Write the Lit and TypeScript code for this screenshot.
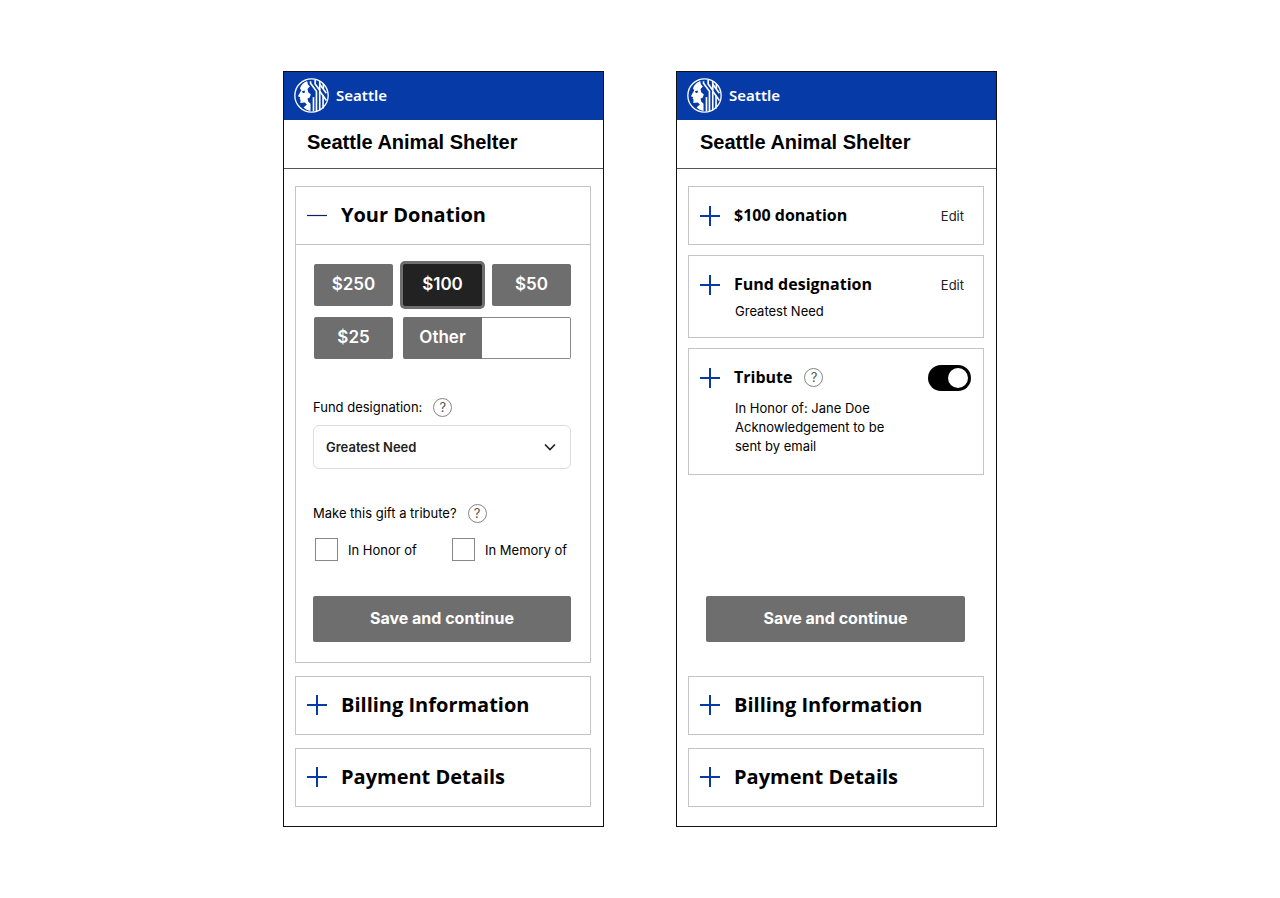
import { LitElement, html, css, svg } from "lit";
import { customElement, property } from "lit/decorators.js";

const logo = svg`
  <circle cx="53" cy="53" r="50.5" fill="none" stroke="#fff" stroke-width="4" />
  <path fill="#fff" d="M40 9C29 13 21 21 18 32L22 37L12 55L19 58L17 63L20 66L19 76L33 74L39 80L29 89C35 95 42 98 50 100L50 78L43 71L41 62L47 60L51 50L43 43L41 33L48 26L42 19Z" />
  <path fill="#063ba7" d="M24 40L32 38L34 43L27 46Z" />
  <g fill="none" stroke="#fff" stroke-width="5">
    <path d="M50 10V16L68 40V101" />
    <path d="M59 101V58" />
    <path d="M64 6V18L78 37" />
    <path d="M78 9V98" />
    <path d="M78 19L98 46" />
    <path d="M89 18V33" />
    <path d="M78 40L88 54V92" />
    <path d="M88 54L98 68" />
  </g>`;

@customElement("help-button")
export class HelpButton extends LitElement {
  @property() label = "Help";
  static styles = css`
    :host { display: inline-flex; }
    .help {
      box-sizing: border-box;
      width: 19px;
      height: 19px;
      padding: 0;
      border: 1px solid #858585;
      border-radius: 50%;
      background: #fff;
      color: #555;
      font: 13px/17px Inter, sans-serif;
      text-align: center;
    }
  `;
  render() {
    return html`<button class="help" type="button" aria-label=${this.label}>?</button>`;
  }
}

@customElement("panel-icon")
export class PanelIcon extends LitElement {
  @property({ type: Boolean }) open = false;
  static styles = css`
    :host { display: inline-flex; flex: none; }
    .icon { display: block; width: 20px; height: 20px; }
  `;
  render() {
    return html`<svg class="icon" viewBox="0 0 20 20" aria-hidden="true">
      ${this.open
        ? svg`<path d="M0 10.5H20" stroke="#0b2266" stroke-width="1.2" />`
        : svg`<path d="M0 10H20M10 0V20" stroke="#063ba7" stroke-width="2" />`}
    </svg>`;
  }
}

@customElement("app-root")
export class AppRoot extends LitElement {
  static styles = css`
    :host {
      display: flex;
      box-sizing: border-box;
      min-height: 100vh;
      padding: 24px;
      justify-content: center;
      align-items: center;
      background: #fff;
      color: #000;
      font: 13px/20px Inter, sans-serif;
    }
    * { box-sizing: border-box; }
    button, input, select { font-family: inherit; color: inherit; }
    h1, h2, p { margin: 0; }
    .screens { display: flex; flex-wrap: wrap; justify-content: center; gap: 72px; }
    .screen {
      display: flex;
      flex-direction: column;
      width: 321px;
      max-width: 100%;
      border: 1px solid #111;
    }
    .brand {
      display: flex;
      align-items: center;
      gap: 7px;
      height: 48px;
      padding: 0 10px 2px;
      background: #063ba7;
      color: #fff;
      font: 600 15px/24px "Noto Sans", sans-serif;
    }
    .logo { width: 35px; height: 35px; }
    .site {
      padding: 10px 23px 14px;
      border-bottom: 1px solid #555;
      font: bold 20px/24px "Liberation Sans", Arial, sans-serif;
    }
    .content {
      display: flex;
      flex: 1;
      flex-direction: column;
      padding: 17px 12px 19px 11px;
    }
    .card { border: 1px solid #c4c4c4; }
    .card + .card { margin-top: 13px; }
    .summary + .summary { margin-top: 10px; }
    .toggle {
      display: flex;
      align-items: center;
      gap: 14px;
      width: 100%;
      height: 57px;
      padding: 0 11px 2px;
      border: 0;
      background: none;
      font: 700 20px/28px "Open Sans", sans-serif;
      text-align: left;
    }
    .body { padding: 19px 19px 20px 17px; border-top: 1px solid #c4c4c4; }
    .amounts {
      display: grid;
      grid-template-columns: repeat(3, 1fr);
      gap: 11px 10px;
      padding-left: 1px;
    }
    .amount, .save, .otherlabel {
      border: 0;
      border-radius: 2px;
      background: #6e6e6e;
      color: #fff;
      font: 600 17px/24px Inter, sans-serif;
      text-align: center;
    }
    .amount { height: 42px; padding: 0 0 2px; }
    .selected { background: #222; box-shadow: 0 0 0 3px #6e6e6e; }
    .other { display: grid; grid-column: span 2; grid-template-columns: 79px 1fr; height: 42px; }
    .otherlabel { padding-top: 8px; border-radius: 2px 0 0 2px; }
    .otherinput {
      min-width: 0;
      padding: 0 8px;
      border: 1px solid #8a8a8a;
      border-left: 0;
      border-radius: 0 2px 2px 0;
      background: #fff;
      font-size: 16px;
    }
    .field { display: flex; align-items: center; gap: 11px; height: 20px; }
    .fund { margin-top: 38px; }
    .tribute { margin-top: 34px; }
    .picker {
      display: grid;
      align-items: center;
      margin-top: 8px;
    }
    .select {
      grid-area: 1 / 1;
      width: 100%;
      height: 44px;
      padding: 0 12px;
      border: 1px solid #dcdcdc;
      border-radius: 6px;
      background: #fff;
      color: #222;
      font: 600 13px/20px Inter, sans-serif;
      appearance: none;
    }
    .chevron {
      grid-area: 1 / 1;
      justify-self: end;
      width: 12px;
      height: 8px;
      margin-right: 15px;
      pointer-events: none;
    }
    .checks { display: flex; justify-content: space-between; margin: 15px 4px 0 2px; }
    .check { display: flex; align-items: center; gap: 10px; }
    .box {
      appearance: none;
      width: 23px;
      height: 23px;
      margin: 0;
      border: 1px solid #888;
      background: #fff;
    }
    .save {
      display: block;
      width: 100%;
      height: 46px;
      padding: 0 0 2px;
      font-size: 16px;
      font-weight: 700;
    }
    .body .save { margin-top: 35px; }
    .pending { margin: auto 19px 34px 18px; }
    .summary { padding: 18px 11px; }
    .row { display: flex; align-items: center; height: 21px; }
    .open {
      display: flex;
      align-items: center;
      gap: 14px;
      padding: 0;
      border: 0;
      background: none;
      font: 700 16px/21px "Open Sans", sans-serif;
    }
    .row help-button { margin-left: 12px; }
    .edit { margin-left: auto; padding-right: 8px; color: #222; text-decoration: none; }
    .note { max-width: 200px; padding-left: 35px; line-height: 19px; }
    .fundnote { padding: 6px 0 0 35px; }
    .honor { padding-top: 11px; }
    .switch {
      appearance: none;
      display: flex;
      flex: none;
      width: 43px;
      height: 26px;
      margin: 0 1px 0 auto;
      padding: 3px;
      border-radius: 13px;
      background: #000;
    }
    .switch::before {
      content: "";
      width: 20px;
      height: 20px;
      border-radius: 50%;
      background: #fff;
    }
    .switch:checked { justify-content: flex-end; }
    .fundcard { padding-bottom: 16px; }
  `;

  private top() {
    return html`
      <header>
        <div class="brand">
          <svg class="logo" viewBox="0 0 106 106" aria-hidden="true">${logo}</svg>
          <span>Seattle</span>
        </div>
        <h1 class="site">Seattle Animal Shelter</h1>
      </header>`;
  }

  private closed(title: string) {
    return html`
      <section class="card">
        <h2><button class="toggle" type="button" aria-expanded="false">
          <panel-icon></panel-icon><span>${title}</span>
        </button></h2>
      </section>`;
  }

  private opener(title: string) {
    return html`<h2><button class="open" type="button" aria-expanded="false">
      <panel-icon></panel-icon><span>${title}</span>
    </button></h2>`;
  }

  private amount(value: number, selected = false) {
    return html`<button class="amount ${selected ? "selected" : ""}" type="button"
      aria-pressed=${selected ? "true" : "false"}>$${value}</button>`;
  }

  render() {
    return html`
      <div class="screens">
        <div class="screen">
          ${this.top()}
          <main class="content">
            <section class="card">
              <h2><button class="toggle" type="button" aria-expanded="true">
                <panel-icon open></panel-icon><span>Your Donation</span>
              </button></h2>
              <div class="body">
                <div class="amounts">
                  ${this.amount(250)} ${this.amount(100, true)} ${this.amount(50)} ${this.amount(25)}
                  <div class="other">
                    <label class="otherlabel" for="other">Other</label>
                    <input class="otherinput" id="other" type="text" inputmode="decimal" />
                  </div>
                </div>
                <div class="field fund">
                  <label for="fund">Fund designation:</label>
                  <help-button label="About fund designation"></help-button>
                </div>
                <div class="picker">
                  <select class="select" id="fund"><option>Greatest Need</option></select>
                  <svg class="chevron" viewBox="0 0 12 8" aria-hidden="true">
                    <path d="M1 1.5L6 6.5L11 1.5" fill="none" stroke="#222" stroke-width="1.7" />
                  </svg>
                </div>
                <div class="field tribute">
                  <span id="tribute">Make this gift a tribute?</span>
                  <help-button label="About tributes"></help-button>
                </div>
                <div class="checks" role="group" aria-labelledby="tribute">
                  <label class="check"><input class="box" type="checkbox" />In Honor of</label>
                  <label class="check"><input class="box" type="checkbox" />In Memory of</label>
                </div>
                <button class="save" type="button">Save and continue</button>
              </div>
            </section>
            ${this.closed("Billing Information")} ${this.closed("Payment Details")}
          </main>
        </div>

        <div class="screen">
          ${this.top()}
          <main class="content">
            <section class="card summary">
              <div class="row">${this.opener("$100 donation")}<a class="edit" href="#donation">Edit</a></div>
            </section>
            <section class="card summary fundcard">
              <div class="row">${this.opener("Fund designation")}<a class="edit" href="#fund">Edit</a></div>
              <p class="fundnote">Greatest Need</p>
            </section>
            <section class="card summary">
              <div class="row">
                ${this.opener("Tribute")}
                <help-button label="About tributes"></help-button>
                <input class="switch" type="checkbox" role="switch" aria-label="Tribute" checked />
              </div>
              <p class="note honor">In Honor of: Jane Doe</p>
              <p class="note">Acknowledgement to be sent by email</p>
            </section>
            <div class="pending"><button class="save" type="button">Save and continue</button></div>
            ${this.closed("Billing Information")} ${this.closed("Payment Details")}
          </main>
        </div>
      </div>`;
  }
}
